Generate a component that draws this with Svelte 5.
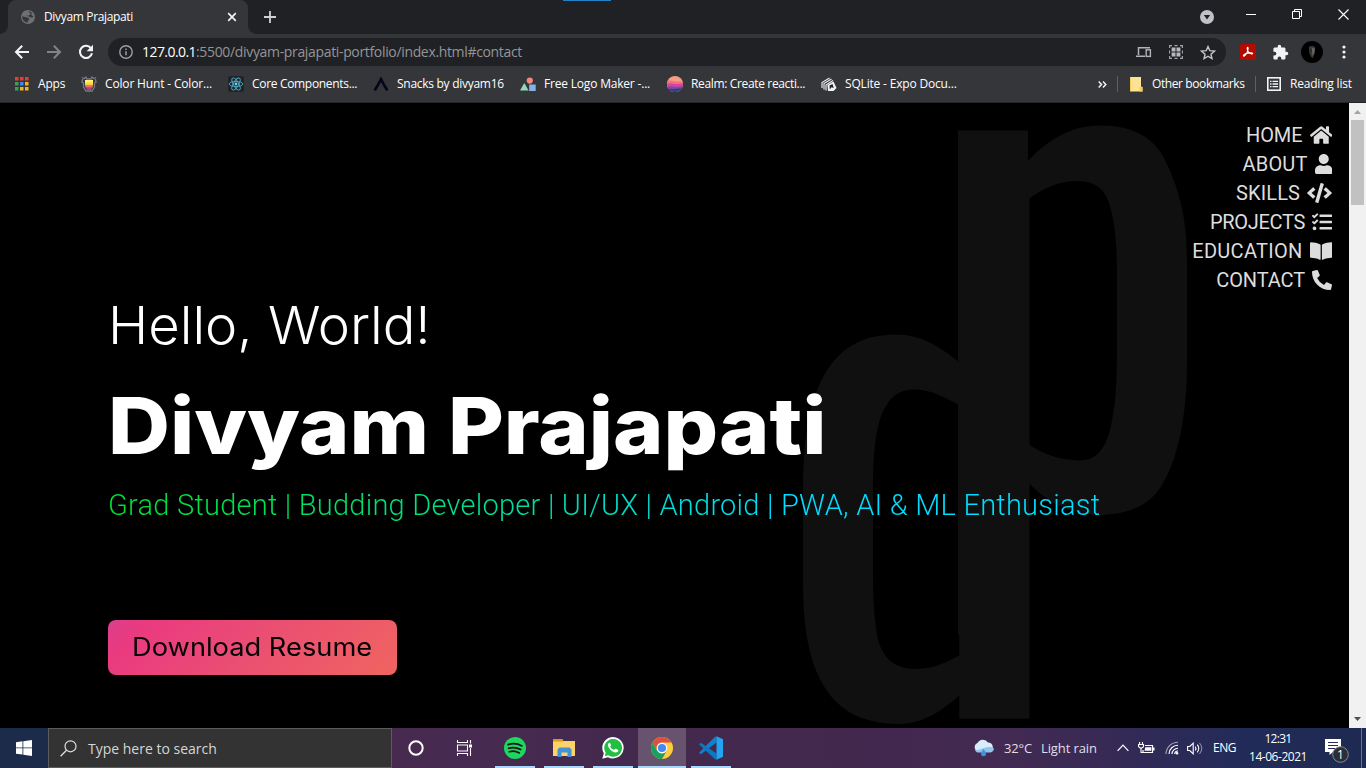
<script>
  const bookmarks = [
    { icon: 'apps', label: 'Apps', ls: -0.2, w: 67 },
    { icon: 'hunt', label: 'Color Hunt - Color...', ls: -0.16, w: 147 },
    { icon: 'react', label: 'Core Components...', ls: -0.32, w: 145 },
    { icon: 'snack', label: 'Snacks by divyam16', ls: -0.28, w: 147 },
    { icon: 'logo', label: 'Free Logo Maker -...', ls: -0.19, w: 147 },
    { icon: 'realm', label: 'Realm: Create reacti...', ls: -0.35, w: 154 },
    { icon: 'expo', label: 'SQLite - Expo Docu...', ls: -0.18, w: 140 }
  ];

  const nav = [
    {
      label: 'HOME', ls: -0.1, w: 22.5, vb: '0 0 576 512',
      d: 'M280.37 148.26L96 300.11V464a16 16 0 0 0 16 16l112.06-.29a16 16 0 0 0 15.92-16V368a16 16 0 0 1 16-16h64a16 16 0 0 1 16 16v95.64a16 16 0 0 0 16 16.05L464 480a16 16 0 0 0 16-16V300L295.67 148.26a12.19 12.19 0 0 0-15.3 0zM571.6 251.47L488 182.56V44.05a12 12 0 0 0-12-12h-56a12 12 0 0 0-12 12v72.61L318.47 43a48 48 0 0 0-61 0L4.34 251.47a12 12 0 0 0-1.6 16.9l25.5 31A12 12 0 0 0 45.15 301l235.22-193.74a12.19 12.19 0 0 1 15.3 0L530.9 301a12 12 0 0 0 16.9-1.6l25.5-31a12 12 0 0 0-1.7-16.93z'
    },
    {
      label: 'ABOUT', ls: 0.15, w: 17.5, vb: '0 0 448 512',
      d: 'M224 256c70.7 0 128-57.3 128-128S294.7 0 224 0 96 57.3 96 128s57.3 128 128 128zm89.6 32h-16.7c-22.2 10.2-46.9 16-72.9 16s-50.6-5.8-72.9-16h-16.7C60.2 288 0 348.2 0 422.4V464c0 26.5 21.5 48 48 48h352c26.5 0 48-21.5 48-48v-41.6c0-74.2-60.2-134.4-134.4-134.4z'
    },
    {
      label: 'SKILLS', ls: 0.1, w: 25, vb: '0 0 640 512',
      d: 'M278.9 511.5l-61-17.7c-6.4-1.8-10-8.5-8.2-14.9L346.2 8.7c1.8-6.4 8.5-10 14.9-8.2l61 17.7c6.4 1.8 10 8.5 8.2 14.9L293.8 503.3c-1.9 6.4-8.5 10.1-14.9 8.2zm-114-112.2l43.5-46.4c4.6-4.9 4.3-12.7-.8-17.2L117 256l90.6-79.7c5.1-4.5 5.5-12.3.8-17.2l-43.5-46.4c-4.5-4.8-12.1-5.1-17-.5L3.8 247.2c-5.1 4.7-5.1 12.8 0 17.5l144.1 135.1c4.9 4.6 12.5 4.4 17-.5zm327.2.6l144.1-135.1c5.1-4.7 5.1-12.8 0-17.5L492.1 112.1c-4.8-4.5-12.4-4.3-17 .5L431.6 159c-4.6 4.9-4.3 12.7.8 17.2L523 256l-90.6 79.7c-5.1 4.5-5.5 12.3-.8 17.2l43.5 46.4c4.5 4.9 12.1 5.1 17 .6z'
    },
    {
      label: 'PROJECTS', ls: -0.3, w: 20, vb: '0 0 512 512',
      d: 'M139.61 35.5a12 12 0 0 0-17 0L58.93 98.81l-22.7-22.12a12 12 0 0 0-17 0L3.53 92.41a12 12 0 0 0 0 17l47.59 47.4a12.78 12.78 0 0 0 17.61 0l15.59-15.62L156.52 69a12.09 12.09 0 0 0 .09-17zm0 159.19a12 12 0 0 0-17 0l-63.68 63.72-22.7-22.1a12 12 0 0 0-17 0L3.53 252a12 12 0 0 0 0 17L51 316.5a12.77 12.77 0 0 0 17.6 0l15.7-15.69 72.2-72.22a12 12 0 0 0 .09-16.9zM64 368c-26.49 0-48.59 21.5-48.59 48S37.53 464 64 464a48 48 0 0 0 0-96zm432 16H208a16 16 0 0 0-16 16v32a16 16 0 0 0 16 16h288a16 16 0 0 0 16-16v-32a16 16 0 0 0-16-16zm0-320H208a16 16 0 0 0-16 16v32a16 16 0 0 0 16 16h288a16 16 0 0 0 16-16V80a16 16 0 0 0-16-16zm0 160H208a16 16 0 0 0-16 16v32a16 16 0 0 0 16 16h288a16 16 0 0 0 16-16v-32a16 16 0 0 0-16-16z'
    },
    {
      label: 'EDUCATION', ls: 0.28, w: 22.5, vb: '0 0 576 512',
      d: 'M542.22 32.05c-54.8 3.11-163.72 14.43-230.96 55.59-4.64 2.84-7.27 7.89-7.27 13.17v363.87c0 11.55 12.63 18.85 23.28 13.49 69.18-34.82 169.23-44.32 218.7-46.92 16.89-.89 30.02-14.43 30.02-30.66V62.75c.01-17.71-15.35-31.74-33.77-30.7zM264.73 87.64C197.5 46.48 88.58 35.17 33.78 32.05 15.36 31.01 0 45.04 0 62.75V400.6c0 16.24 13.13 29.78 30.02 30.66 49.49 2.6 149.59 12.11 218.77 46.95 10.62 5.35 23.21-1.94 23.21-13.46V100.63c0-5.29-2.62-10.14-7.27-12.99z'
    },
    {
      label: 'CONTACT', ls: -0.12, w: 20, vb: '0 0 512 512',
      d: 'M497.39 361.8l-112-48a24 24 0 0 0-28 6.9l-49.6 60.6A370.66 370.66 0 0 1 130.6 204.11l60.6-49.6a23.94 23.94 0 0 0 6.9-28l-48-112A24.16 24.16 0 0 0 122.6.61l-104 24A24 24 0 0 0 0 48c0 256.5 207.9 464 464 464a24 24 0 0 0 23.4-18.6l24-104a24.29 24.29 0 0 0-14.01-27.6z'
    }
  ];

  const dots = [0, 5, 10];
  const dotColors = ['#ea3e35', '#ea3e35', '#ea3e35', '#2fa653', '#3c86f0', '#f5b21c', '#2fa653', '#f5b21c', '#f5b21c'];
</script>

<div class="screen">
  <header class="browser">
    <div class="tabstrip">
      <div class="tab">
        <svg class="globe" width="14" height="14" viewBox="0 0 14 14"><circle cx="7" cy="7" r="7" fill="#6d7074" /><path d="M1.200 6.200c1.700.2 2.600.9 3.600.9 1.300 0 1.500.9 2.800 1 .9.100.8 1.100.2 1.700-.8.800-.6 1.500-1.300 2.700C3.300 12.300 1 9.500 1.200 6.200zM7.300 1.300c1.500 0 3 .8 3.900 2-.9.3-1.300 1-2.200 1.100-.9.2-.6 1.200-1.600 1.300-.8.100-1.500-.6-2-.1-.4.500.8.7 1.700.7 1.300 0 1.700 1.300 3 1.200.9-.1 1.500-.7 2.500-.6" fill="#35363a" /></svg>
        <span class="title">Divyam Prajapati</span>
        <svg class="x" width="10" height="10" viewBox="0 0 10 10"><path d="M1.200 1.200l7.600 7.600M8.800 1.200L1.200 8.800" stroke="#f1f3f4" stroke-width="1.700" /></svg>
      </div>
      <svg class="plus" width="12" height="12" viewBox="0 0 12 12"><path d="M6 0v12M0 6h12" stroke="#cfd1d4" stroke-width="1.800" /></svg>
      <i class="accent"></i>
      <svg class="down" width="14" height="14" viewBox="0 0 14 14"><circle cx="7" cy="7" r="7" fill="#bfc2c6" /><path d="M3.800 5h6.400L7 9.600z" fill="#202124" /></svg>
      <div class="winbtns">
        <svg width="11" height="11" viewBox="0 0 11 11"><path d="M0 5.500h10" stroke="#fff" /></svg>
        <svg width="11" height="11" viewBox="0 0 11 11"><path d="M.5 2.500h7v7h-7zM2.500 2.500v-2h7v7h-2" fill="none" stroke="#fff" /></svg>
        <svg width="11" height="11" viewBox="0 0 11 11"><path d="M.5.500l10 10M10.500.500l-10 10" stroke="#fff" stroke-width="1.100" /></svg>
      </div>
    </div>

    <div class="toolbar">
      <svg class="back" width="16" height="16" viewBox="0 0 16 16"><path d="M15 8H2.500M8.200 1.800L2 8l6.200 6.200" fill="none" stroke="#f1f3f4" stroke-width="2" /></svg>
      <svg class="fwd" width="16" height="16" viewBox="0 0 16 16"><path d="M1 8h12.500M7.800 1.800L14 8l-6.200 6.200" fill="none" stroke="#828387" stroke-width="2" /></svg>
      <svg class="reload" width="16" height="16" viewBox="0 0 16 16"><path d="M13.200 4.600A6.100 6.100 0 1 0 14 9.300" fill="none" stroke="#f1f3f4" stroke-width="2.100" /><path d="M15 .8v6.400H8.600z" fill="#f1f3f4" /></svg>
      <div class="omnibox">
        <svg class="info" width="14" height="14" viewBox="0 0 14 14"><circle cx="7" cy="7" r="6.200" fill="none" stroke="#9aa0a6" stroke-width="1.400" /><path d="M7 6.200V10.300M7 3.600v1.500" stroke="#9aa0a6" stroke-width="1.500" /></svg>
        <span class="host">127.0.0.1</span><span class="path">:5500/divyam-prajapati-portfolio/index.html#contact</span>
        <div class="omni-icons">
          <svg width="16" height="12" viewBox="0 0 16 12"><path d="M2.500 9V1.700H14M0 10.200h9" fill="none" stroke="#b0b3b7" stroke-width="1.500" /><rect x="10.200" y="3.800" width="4.200" height="6.600" fill="none" stroke="#b0b3b7" stroke-width="1.400" /></svg>
          <svg width="14" height="14" viewBox="0 0 14 14"><path d="M.6 3V.6H3M11 .6h2.400V3M13.400 11v2.400H11M3 13.400H.6V11M5.500.6h3M5.500 13.400h3M.6 5.500v3M13.400 5.500v3" fill="none" stroke="#a5a8ac" stroke-width="1.100" /><path d="M2.600 2.600h3.900v3.900H2.600zM7.500 2.600h3.900v3.900H7.500zM2.600 7.500h3.900v3.900H2.600zM7.500 7.500h3.900v3.900H7.500z" fill="#b6b9bd" /></svg>
          <svg width="16" height="15" viewBox="0 0 16 15"><path d="M8 1.600l1.850 4.100 4.500.45-3.400 3 1 4.400L8 11.250l-3.950 2.300 1-4.400-3.400-3 4.500-.45z" fill="none" stroke="#c4c7ca" stroke-width="1.400" /></svg>
        </div>
      </div>
      <svg class="pdf" width="16" height="16" viewBox="0 0 16 16"><rect width="16" height="16" rx="2" fill="#b30b00" /><path d="M7.600 3.300c1 0 .5 2.900-.6 5.100S4.100 12.600 3.500 12s1.500-2.300 4.300-2.900 4.900-.3 4.800.5c-.2 1-2.900-.2-4.200-1.800S6.900 3.300 7.600 3.300z" fill="none" stroke="#fff" stroke-width="1.100" /></svg>
      <svg class="puzzle" width="17" height="17" viewBox="0 0 24 24"><path d="M20.500 11H19V7c0-1.100-.9-2-2-2h-4V3.500a2.500 2.500 0 0 0-5 0V5H4c-1.100 0-2 .9-2 2v3.800h1.500a2.700 2.700 0 0 1 0 5.400H2V20c0 1.100.9 2 2 2h3.800v-1.500a2.700 2.700 0 0 1 5.400 0V22H17c1.100 0 2-.9 2-2v-4h1.500a2.500 2.500 0 0 0 0-5z" fill="#f1f3f4" /></svg>
      <svg class="avatar" width="22" height="22" viewBox="0 0 22 22"><circle cx="11" cy="11" r="11" fill="#000" /><path d="M8 5.500c2-1 5-.8 6 .7l-.3 6-2 5-1.700-1.500L8 11z" fill="#3a3939" /><path d="M11 7l3 .5-1 5-1.500 2.500z" fill="#6b6866" /><path d="M8.500 8l2 1-.5 3z" fill="#242426" /></svg>
      <svg class="kebab" width="4" height="14" viewBox="0 0 4 14"><circle cx="2" cy="2" r="1.600" fill="#f1f3f4" /><circle cx="2" cy="7" r="1.600" fill="#f1f3f4" /><circle cx="2" cy="12" r="1.600" fill="#f1f3f4" /></svg>
    </div>

    <div class="bookmarks">
      {#each bookmarks as b}
        <div class="bm" class:first={b.icon === 'apps'} style:width="{b.w}px">
          <svg width="16" height="16" viewBox="0 0 16 16">
            {#if b.icon === 'apps'}
              {#each dots as y, r}{#each dots as x, c}<rect x={x + 1} y={y + 1} width="3.500" height="3.500" fill={dotColors[r * 3 + c]} />{/each}{/each}
            {:else if b.icon === 'hunt'}
              <path d="M.8 1.500l2.700 1L5 1l1 2h4l1-2 1.500 1.500 2.700-1M1.800 3l-1 3 1.700 1v4L5 15h6l2.500-4V7l1.700-1-1-3" fill="none" stroke="#777985" stroke-width="1.300" />
              <path d="M4 4h8v3H4z" fill="#fff36b" /><path d="M4 6.500h8v3H4z" fill="#ffd13c" /><path d="M4 9.300h8l-.7 2.500H4.700z" fill="#f0716f" /><path d="M4.700 11.600h6.600L10 14H6z" fill="#b04178" />
            {:else if b.icon === 'react'}
              <rect width="16" height="16" rx="2" fill="#20232a" />
              <g fill="none" stroke="#4fa6bd" stroke-width=".9"><ellipse cx="8" cy="8" rx="6.800" ry="2.600" /><ellipse cx="8" cy="8" rx="6.800" ry="2.600" transform="rotate(60 8 8)" /><ellipse cx="8" cy="8" rx="6.800" ry="2.600" transform="rotate(120 8 8)" /></g><circle cx="8" cy="8" r="1.400" fill="#61dafb" />
            {:else if b.icon === 'snack'}
              <path d="M2.200 13.500C4.800 9.500 6.500 6 8 3.200c1.500 2.800 3.200 6.300 5.800 10.300" fill="none" stroke="#04041c" stroke-width="2.600" stroke-linecap="round" />
            {:else if b.icon === 'logo'}
              <path d="M0 14.500L4.300 7l4.200 7.500z" fill="#94d8bb" /><circle cx="9.800" cy="4.600" r="3.100" fill="#f6887a" /><rect x="9.200" y="8.500" width="6.500" height="6.500" fill="#85b3e8" />
            {:else if b.icon === 'realm'}
              <defs><clipPath id="disc"><circle cx="8" cy="8" r="8" /></clipPath></defs>
              <g clip-path="url(#disc)"><rect width="16" height="16" fill="#f99b85" /><path d="M0 5c4-2 8 2 16 0v11H0z" fill="#f4717f" /><path d="M0 8c5-2.500 9 2 16-1v9H0z" fill="#d6469f" /><path d="M0 11c5-2 10 1.500 16-1.500V16H0z" fill="#7e4aa8" /><path d="M0 12.500c5 .5 9 1 16-1V16H0z" fill="#33407f" /></g>
            {:else}
              <path d="M1 12V6.500L8.500 2M3 13.500V7.500L10.500 3M5 14.500V9L12 4.500" fill="none" stroke="#e9e9ea" stroke-width="1.200" /><path d="M6.500 9l6-3.500L15.500 12l-3 3H7z" fill="#f4f4f4" /><path d="M8.500 9.500l3-1.500 1.300 4-2.300-.7-1.700 2.200z" fill="#202124" />
            {/if}
          </svg>
          <span style:letter-spacing="{b.ls}px">{b.label}</span>
        </div>
      {/each}
      <div class="bm-right">
        <svg class="more" width="9" height="7" viewBox="0 0 9 7"><path d="M.7.600L3.500 3.500.7 6.400M5 .6l2.800 2.900L5 6.400" fill="none" stroke="#f1f3f4" stroke-width="1.500" /></svg>
        <i class="sep"></i>
        <svg class="folder" width="13" height="15" viewBox="0 0 13 15"><path d="M0 0h11v9.500l1.500.5v4.500H0z" fill="#fde293" /><path d="M0 0h1v14H0zM9.500 10h3v4.500h-3z" fill="#f3cc5c" /></svg>
        <span class="other">Other bookmarks</span>
        <i class="sep two"></i>
        <svg class="rl" width="14" height="14" viewBox="0 0 14 14"><rect x=".8" y=".8" width="12.400" height="12.400" fill="none" stroke="#f1f3f4" stroke-width="1.600" /><path d="M3 4.400h1.500M3 7h1.500M3 9.600h1.500M5.500 4.400H11M5.500 7H11M5.500 9.600H11" stroke="#f1f3f4" stroke-width="1.300" /></svg>
        <span class="reading">Reading list</span>
      </div>
    </div>
  </header>

  <div class="viewport">
    <main class="page">
      <svg class="mark" width="386" height="602" viewBox="802 124 386 602" aria-hidden="true">
        <g fill="#101010">
          <rect x="958" y="130.500" width="70" height="504" />
          <rect x="959.300" y="170" width="70.200" height="548.700" />
          <path d="M1027 161.700C1050 138 1072 125.500 1101 125.500C1132 125.500 1152 137 1163 156C1179 188 1187 216 1187 262V362C1187 416 1178 461 1160 488C1148 506 1128 514 1101 515C1071 515 1047 503 1027 481V443C1044 455 1060 460 1080 460.500C1094 460.500 1103 452 1109 434C1115 412 1117 388 1117 345V275C1117 240 1114 212 1106 196C1100 185 1090 181 1077 181C1060 181 1045 187 1027 200Z" />
          <path d="M961 364C940 346 920 334.500 896 334.500C856 334.500 832 354 818 388C807 414 803 450 803 487V580C803 625 808 656 821 681C836 710 862 724 899 724C922 724 941 712 961 694V654.500C944 664 931 669 916 669C896 669 884 660 878 640C874 620 873 596 873 570V490C873 450 876 422 886 406C893 394 902 389.500 915 389.500C929 389.500 943 396 961 406Z" />
        </g>
      </svg>
      <section class="hero">
        <p class="hello">Hello, World!</p>
        <h1>Divyam Prajapati</h1>
        <p class="tagline">Grad Student | Budding Developer | UI/UX | Android | PWA, AI &amp; ML Enthusiast</p>
        <a class="resume" href="#resume"><span>Download Resume</span></a>
      </section>
      <nav>
        {#each nav as n}
          <a href="#{n.label.toLowerCase()}">
            <span style:letter-spacing="{n.ls}px">{n.label}</span>
            <svg width={n.w} height="20" viewBox={n.vb}><path d={n.d} fill="#ddd" /></svg>
          </a>
        {/each}
      </nav>
    </main>
    <div class="scrollbar">
      <svg width="17" height="17" viewBox="0 0 17 17"><path d="M5 11l3.500-4 3.500 4z" fill="#a3a3a3" /></svg>
      <i class="thumb"></i>
      <svg width="17" height="17" viewBox="0 0 17 17"><path d="M5 6h7l-3.500 4z" fill="#505050" /></svg>
    </div>
  </div>

  <footer class="taskbar">
    <div class="start"><svg width="16" height="16" viewBox="0 0 16 16"><path d="M0 2.200L6.500 1.300V7.500H0zM7.300 1.200L16 0v7.500H7.300zM0 8.300h6.500v6.300L0 13.700zM7.300 8.300H16V16l-8.700-1.200z" fill="#fff" /></svg></div>
    <div class="search">
      <svg width="17" height="17" viewBox="0 0 17 17"><circle cx="10.500" cy="6.300" r="5.500" fill="none" stroke="#e0e0e0" stroke-width="1.200" /><path d="M6.500 10.300L.6 16.200" stroke="#e0e0e0" stroke-width="1.300" /></svg>
      <span>Type here to search</span>
    </div>
    <div class="apps">
      <div class="app"><svg width="16" height="16" viewBox="0 0 16 16"><circle cx="8" cy="8" r="6.700" fill="none" stroke="#fff" stroke-width="2" /></svg></div>
      <div class="app"><svg width="17" height="16" viewBox="0 0 17 16"><path d="M1.500 0v2.500h10V0M1.500 16v-2.500h10V16M1.500 5h10v6h-10zM14.500 0v3.500M14.500 8v8" fill="none" stroke="#fff" stroke-width="1.100" /><rect x="13" y="4.500" width="3" height="3" fill="#fff" /></svg></div>
      <div class="app open lead"><svg width="22" height="22" viewBox="0 0 22 22"><circle cx="11" cy="11" r="11" fill="#1ed760" /><path d="M4 7.600c4.800-1.500 9.800-1 14 1.300M4.700 11.300c4-1.200 8.400-.7 12 1.300M5.300 14.700c3.400-1 7-.6 10 1.200" fill="none" stroke="#191414" stroke-width="1.700" stroke-linecap="round" /></svg></div>
      <div class="app open"><svg width="22" height="20" viewBox="0 0 22 20"><path d="M0 1.500h9.500l1 1.500H22v15H0z" fill="#fdd266" /><path d="M0 1h9.300l1 2.500H0z" fill="#dc9a12" /><path d="M4.500 19v-7.500l2-2h10l2 2V19h-4v-4.500H8.500V19z" fill="#3f93d6" /></svg></div>
      <div class="app open"><svg width="22" height="22" viewBox="0 0 22 22"><path d="M.3 21.700l1.500-5.400A10.700 10.700 0 1 1 5.900 20.200z" fill="#fff" /><path d="M2.700 19.300l1-3.600A8.900 8.900 0 1 1 6.300 18.300z" fill="#23be42" /><path d="M7.800 5.800c-.5-.1-1.900.7-1.900 2.300 0 2.800 4.200 7.200 7.500 7.500 1.500.1 2.800-.9 2.900-2 .1-.6 0-.7-.4-.9l-2.200-1c-.5-.2-.7.1-1.200.8-.4.500-.7.400-1.300.1-1.300-.6-2.300-1.600-3-2.900-.2-.5.7-.9.8-1.500 0-.4-.7-2.200-1.200-2.400z" fill="#fff" /></svg></div>
      <div class="app open active"><svg width="22" height="22" viewBox="0 0 22 22"><circle cx="11" cy="11" r="11" fill="#ffcd40" /><path d="M1.500 5.500A11 11 0 0 1 20.500 5.500H11a5.500 5.500 0 0 0-4.800 8.200z" fill="#dd4f43" /><path d="M1.470 5.500A11 11 0 0 0 11 22l4.800-8.300a5.500 5.500 0 0 1-9.600 0z" fill="#1aa15f" /><circle cx="11" cy="11" r="5.200" fill="#fff" /><circle cx="11" cy="11" r="4.100" fill="#4587f3" /></svg></div>
      <div class="app open"><svg width="24" height="24" viewBox="0 0 24 24"><path d="M17.500.3v6.200L1.900 18.300 0 16.800 15.500 1.200z" fill="#0f80cc" /><path d="M0 8.300l1.900-1.500L17.500 17.500v6.200l-2-.9z" fill="#0a78c2" /><path d="M17.500.3L24 3.200v17.600l-6.500 2.900z" fill="#23a4f2" /></svg></div>
    </div>
    <div class="tray">
      <svg class="weather" width="22" height="18" viewBox="0 0 22 18"><path d="M5 12.500a4.500 4.500 0 0 1-.5-8.500A6 6 0 0 1 15 3.500a4.700 4.700 0 0 1 2 9z" fill="#d9ecfb" /><path d="M2 10.500C6 13 14 5 21 9.500c0 2-2 4-4 4H5c-1.500 0-3-1.500-3-3z" fill="#8fc4ee" /><path d="M10.500 10c1.500 2 2.500 3.300 2.500 4.700a2.500 2.500 0 0 1-5 0c0-1.400 1-2.700 2.500-4.700z" fill="#3a94dc" /></svg>
      <span class="temp">32°C</span>
      <span class="rain">Light rain</span>
      <svg class="chev" width="12" height="8" viewBox="0 0 12 8"><path d="M.6 6.800L6 1.200l5.400 5.600" fill="none" stroke="#fff" stroke-width="1.200" /></svg>
      <svg class="batt" width="17" height="13" viewBox="0 0 17 13"><path d="M7 3.500h7.500v7H5V8" fill="none" stroke="#fff" stroke-width="1.200" /><path d="M7.300 5.300h6v3.500h-6.800zM15 5.500h1.500v3H15z" fill="#fff" /><path d="M.6 2.500h4.900v2.300L3 6.500.6 4.800zM1.600 0v2M4.500 0v2M3 6v4.500h2" fill="none" stroke="#fff" stroke-width="1.100" /></svg>
      <svg class="wifi" width="14" height="14" viewBox="0 0 14 14"><g fill="none" stroke="#fff" stroke-width="1.100"><path d="M1 13A12 12 0 0 1 13 1.200" stroke="#aaa4bd" /><path d="M4 13A9 9 0 0 1 13 4.200" /><path d="M7 13A6 6 0 0 1 13 7.200" /><path d="M9.700 13A3 3 0 0 1 13 10" /></g><circle cx="12" cy="12.300" r="1.300" fill="#fff" /></svg>
      <svg class="vol" width="16" height="13" viewBox="0 0 16 13"><g fill="none" stroke="#fff" stroke-width="1.100"><path d="M.6 4.500h2.200L6.200 1.200v10.600L2.800 8.500H.6z" /><path d="M8.200 4.500q1.500 2 0 4M10.300 2.700q3 3.800 0 7.600" /><path d="M12.500 1q4.500 5.500 0 11" stroke="#8d8aa8" /></g></svg>
      <span class="lang">ENG</span>
      <div class="clock"><span class="time">12:31</span><span class="date">14-06-2021</span></div>
      <svg class="note" width="25" height="25" viewBox="0 0 25 25"><path d="M0 1h16v13H8l-3.500 3V14H0z" fill="#fff" /><path d="M3 4.500h10M3 7.500h10M3 10.500h7" stroke="#2a2b5a" stroke-width="1.100" /><circle cx="15.500" cy="16.500" r="7.800" fill="#2c2d36" stroke="#8b8c92" /><text x="15.500" y="20.800" text-anchor="middle" fill="#fff" font-size="12">1</text></svg>
      <i class="peek"></i>
    </div>
  </footer>
</div>

<style>
  :global(body) { margin: 0; background: #000; }
  .screen { width: 1366px; height: 768px; overflow: hidden; display: flex; flex-direction: column; font: 12px "Open Sans", "Noto Sans", sans-serif; color: #fff; background: #000; }
  svg { display: block; flex: none; }
  span { white-space: nowrap; }

  .browser { height: 103px; flex: none; background: #35363a; box-sizing: border-box; border-bottom: 1px solid #242528; }
  .tabstrip { position: relative; height: 34px; background: #202124; display: flex; align-items: center; }
  .tab { position: relative; width: 240px; height: 34px; margin-left: 8px; background: #35363a; border-radius: 8px 8px 0 0; display: flex; align-items: center; box-sizing: border-box; padding-left: 13px; }
  .tab::before, .tab::after { content: ""; position: absolute; bottom: 0; width: 8px; height: 8px; }
  .tab::before { left: -8px; background: radial-gradient(circle at 0 0, transparent 7.500px, #35363a 8px); }
  .tab::after { right: -8px; background: radial-gradient(circle at 100% 0, transparent 7.500px, #35363a 8px); }
  .title { margin-left: 9px; width: 183px; letter-spacing: -0.34px; padding-bottom: 1px; }
  .plus { margin-left: 16px; }
  .accent { position: absolute; left: 563px; top: 0; width: 48px; height: 1px; background: #2382c8; }
  .down { margin-left: auto; }
  .winbtns { display: flex; gap: 35px; margin: -6px 17px 0 32px; }

  .toolbar { height: 36px; display: flex; align-items: center; }
  .back { margin-left: 14px; }
  .fwd { margin-left: 16px; }
  .reload { margin-left: 16px; }
  .omnibox { width: 1118px; height: 28px; margin-left: 14px; border-radius: 14px; background: #202124; display: flex; align-items: center; font-size: 14px; box-sizing: border-box; padding: 0 10px 0 11px; }
  .host { margin-left: 9px; letter-spacing: -0.56px; color: #fff; padding-bottom: 1px; }
  .path { letter-spacing: -0.34px; color: #949599; padding-bottom: 1px; }
  .omni-icons { margin-left: auto; display: flex; align-items: center; gap: 17px; }
  .pdf { margin-left: 14px; }
  .puzzle { margin-left: 16px; }
  .avatar { margin-left: 12px; }
  .kebab { margin-left: 19px; }

  .bookmarks { height: 28px; display: flex; align-items: center; }
  .bookmarks span { padding-bottom: 2px; }
  .bm { display: flex; align-items: center; gap: 8px; flex: none; }
  .bm.first { margin-left: 14px; }
  .bm-right { margin-left: auto; display: flex; align-items: center; padding-right: 14px; }
  .sep { width: 1px; height: 16px; background: #5f6064; margin-left: 10px; }
  .sep.two { margin-left: 10px; }
  .folder { margin-left: 12px; }
  .other { margin-left: 9px; width: 93px; letter-spacing: -0.4px; }
  .rl { margin-left: 11px; }
  .reading { margin-left: 9px; width: 62px; letter-spacing: -0.2px; }

  .viewport { flex: 1; display: flex; min-height: 0; }
  .page { position: relative; flex: 1; background: #000; display: flex; justify-content: space-between; overflow: hidden; }
  .mark { position: absolute; left: 802px; top: 21px; }
  .hero { position: relative; padding-left: 108px; display: flex; flex-direction: column; align-items: flex-start; }
  .hero p, h1 { margin: 0; white-space: nowrap; }
  .hello { padding-top: 188px; font: 300 52px/70px Inter, sans-serif; transform: scaleX(1.045); transform-origin: 0 0; }
  h1 { font: 800 78px/100px Inter, sans-serif; margin-top: 15px !important; transform: scaleX(1.1); transform-origin: 0 0; }
  .tagline { font: 300 29px/40px Roboto, sans-serif; letter-spacing: 0.24px; margin-top: 9px !important; color: transparent; background: linear-gradient(90deg, #00e02c 0, #00e07a 300px, #00dcc0 500px, #00dfff 680px); -webkit-background-clip: text; background-clip: text; }
  .resume { margin-top: 95px; width: 289px; height: 55px; border-radius: 8px; display: flex; align-items: center; justify-content: center; font: 400 25px Inter, sans-serif; color: #080306; text-decoration: none; background: linear-gradient(135deg, #dc3f8c 0, #ea3a80 12%, #ea4c74 45%, #ef6560 100%); }
  .resume span { transform: scaleX(1.09); padding-bottom: 2px; }
  nav { position: relative; display: flex; flex-direction: column; align-items: flex-end; padding: 17px 17px 0 0; }
  nav a { display: flex; align-items: center; gap: 7px; height: 29px; font: 400 20px Roboto, sans-serif; color: #ddd; text-decoration: none; }

  .scrollbar { width: 17px; background: #f1f1f1; display: flex; flex-direction: column; align-items: center; }
  .thumb { width: 13px; height: 85px; background: #c1c1c1; margin-bottom: auto; }

  .taskbar { height: 40px; flex: none; display: flex; background: linear-gradient(90deg, #1d2b4b 0, #1d2b4b 48px, #482a51 390px, #43294d 640px, #42284e 900px, #432a52 1000px, #352a56 1120px, #222b58 1240px, #1e2a52 1366px); }
  .start { width: 48px; display: grid; place-items: center; }
  .search { width: 344px; box-sizing: border-box; border: 1px solid #5c5c5c; background: #333; display: flex; align-items: center; padding-left: 11px; gap: 11px; font-size: 14px; color: #d6d6d6; }
  .apps { display: flex; gap: 1px; }
  .app { width: 48px; height: 40px; display: grid; place-items: center; position: relative; }
  .app:nth-child(2) { margin-left: -1px; }
  .lead { margin-left: 2px; }
  .open::after { content: ""; position: absolute; left: 4px; right: 4px; bottom: 0; height: 2px; background: #a9d7fb; }
  .active { background: #68536f; }
  .active::after { left: 0; right: 0; }
  .tray { margin-left: auto; display: flex; align-items: center; }
  .temp { margin-left: 9px; width: 28px; font-size: 13px; letter-spacing: -0.15px; color: #e2dde6; }
  .rain { margin-left: 9px; width: 56px; font-size: 13px; letter-spacing: -0.1px; color: #e2dde6; }
  .chev { margin-left: 20px; }
  .batt { margin-left: 9px; }
  .wifi { margin-left: 10px; }
  .vol { margin-left: 8px; }
  .lang { margin-left: 10px; width: 23px; letter-spacing: -0.45px; padding-bottom: 1px; }
  .clock { margin-left: 10px; width: 64px; display: flex; flex-direction: column; align-items: center; line-height: 18px; }
  .time { letter-spacing: -0.7px; }
  .date { letter-spacing: -0.46px; }
  .note { margin-left: 15px; margin-top: 5px; }
  .peek { width: 1px; height: 40px; background: #6b7390; margin: 0 4px 0 11px; }
</style>
